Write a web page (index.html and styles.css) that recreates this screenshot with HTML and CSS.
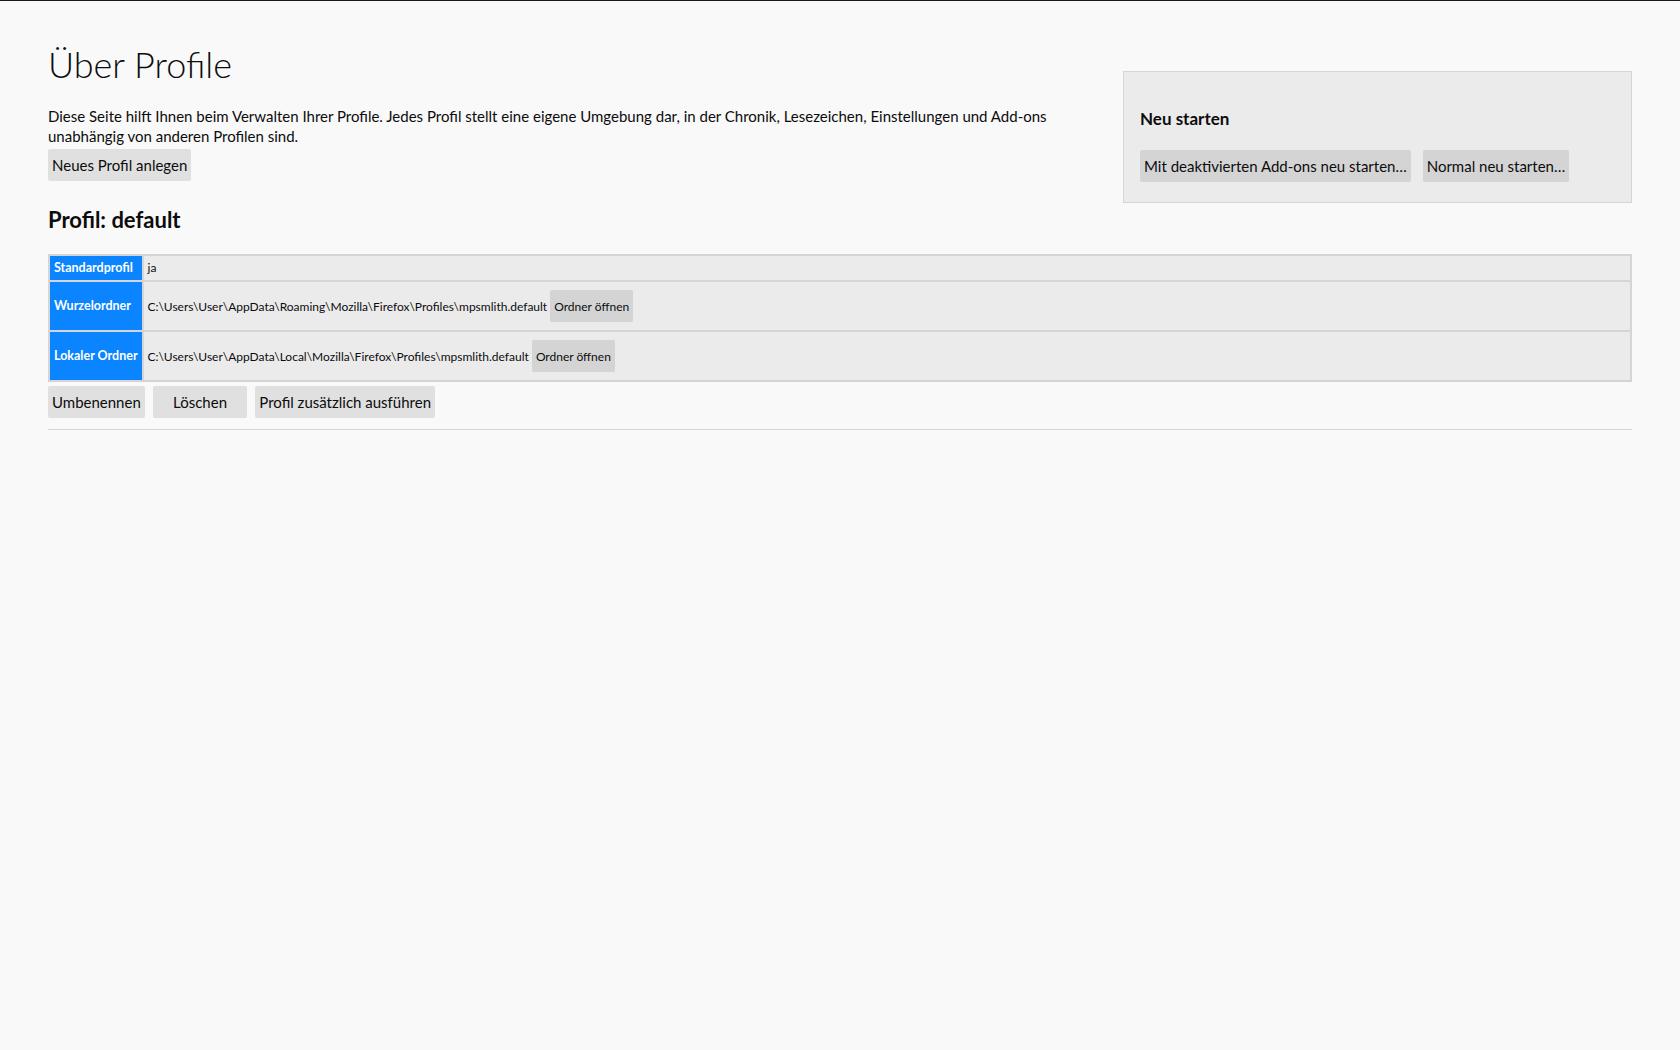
FILE: index.html
```html
<!DOCTYPE html>
<html lang="de">

<head>
  <meta charset="UTF-8" />
  <title>Über Profile</title>
  <link rel="stylesheet" href="styles.css">
</head>

<body>
  <div class="top">
    <div class="intro">
      <h1>Über Profile</h1>
      <p>Diese Seite hilft Ihnen beim Verwalten Ihrer Profile. Jedes Profil stellt eine eigene Umgebung dar, in der Chronik, Lesezeichen, Einstellungen und Add-ons unabhängig von anderen Profilen sind.</p>
      <button>Neues Profil anlegen</button>
    </div>
    <div id="action-box">
      <h3>Neu starten</h3>
      <div class="actions">
        <button>Mit deaktivierten Add-ons neu starten…</button>
        <button>Normal neu starten…</button>
      </div>
    </div>
  </div>

  <div class="profile">
    <h2>Profil: default</h2>
    <table>
      <tbody>
        <tr>
          <th>Standardprofil</th>
          <td>ja</td>
        </tr>
        <tr>
          <th>Wurzelordner</th>
          <td>C:\Users\User\AppData\Roaming\Mozilla\Firefox\Profiles\mpsmlith.default <button>Ordner öffnen</button></td>
        </tr>
        <tr>
          <th>Lokaler Ordner</th>
          <td>C:\Users\User\AppData\Local\Mozilla\Firefox\Profiles\mpsmlith.default <button>Ordner öffnen</button></td>
        </tr>
      </tbody>
    </table>
    <div class="profile-buttons">
      <button>Umbenennen</button>
      <button>Löschen</button>
      <button>Profil zusätzlich ausführen</button>
    </div>
  </div>
</body>

</html>
```

FILE: styles.css
```css
html {
  border-top: 1px solid #1a1a1a;
  background: #f9f9f9;
}

body {
  font-family: "Segoe UI", Lato, sans-serif;
  font-size: 15px;
  color: #0c0c0d;
  margin: 0;
  padding: 40px 48px;
}

h1 {
  font-size: 36px;
  font-weight: 300;
  line-height: 46px;
  margin: 0;
}

h2 {
  font-size: 22px;
  font-weight: 700;
  line-height: 30px;
  margin: 2px 0 19px;
}

h3 {
  font-size: 17px;
  font-weight: 700;
  line-height: 22px;
  margin: 20px 0 20px;
}

p {
  line-height: 20px;
  margin: 19px 0 3px;
}

button {
  font-family: inherit;
  font-size: 15px;
  color: #0c0c0d;
  background: rgba(12, 12, 13, 0.1);
  border: none;
  border-radius: 2px;
  height: 32px;
  min-width: 6.3em;
  padding: 0 4px;
  margin: 0;
}

.top {
  display: flex;
  align-items: flex-start;
}

.intro {
  flex: 1;
}

#action-box {
  width: 509px;
  box-sizing: border-box;
  margin-top: 30px;
  padding: 16px;
  background: #ebebeb;
  border: 1px solid #d5d5d5;
}

.actions {
  display: flex;
  gap: 12px;
  padding-bottom: 4px;
}

table {
  width: 100%;
  border-spacing: 2px;
  background: #d5d5d5;
  font-size: 12px;
}

th,
td {
  padding: 4px;
  line-height: 16px;
  text-align: left;
}

th {
  background: #0a84ff;
  color: #fff;
  font-size: 12.5px;
  font-weight: 700;
  width: 1%;
  white-space: nowrap;
}

td {
  background: #ebebeb;
}

td button {
  font-size: 12px;
  min-width: 82px;
  margin: 4px 0;
}

.profile {
  border-bottom: 1px solid #d5d5d5;
  padding-bottom: 11px;
}

.profile-buttons {
  display: flex;
  gap: 8px;
  margin-top: 4px;
}
```
